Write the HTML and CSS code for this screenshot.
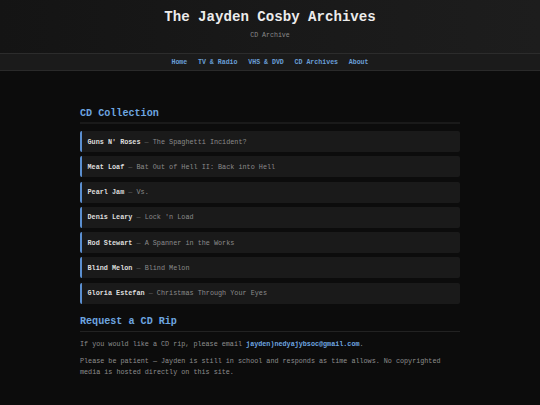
FILE: index.html
```html
<!DOCTYPE html>
<html lang="en">
<head>
<meta charset="utf-8">
<title>The Jayden Cosby Archives</title>
<link rel="stylesheet" href="styles.css">
</head>
<body>
<header class="site-header">
  <h1 class="site-title">The Jayden Cosby Archives</h1>
  <p class="site-subtitle">CD Archive</p>
</header>
<nav class="site-nav">
  <a href="#">Home</a>
  <a href="#">TV &amp; Radio</a>
  <a href="#">VHS &amp; DVD</a>
  <a href="#">CD Archives</a>
  <a href="#">About</a>
</nav>
<main class="content">
  <h2 class="section-title first">CD Collection</h2>
  <ul class="cd-list">
    <li class="cd-item"><span class="artist">Guns N' Roses</span><span class="sep"> — </span><span class="album">The Spaghetti Incident?</span></li>
    <li class="cd-item"><span class="artist">Meat Loaf</span><span class="sep"> — </span><span class="album">Bat Out of Hell II: Back into Hell</span></li>
    <li class="cd-item"><span class="artist">Pearl Jam</span><span class="sep"> — </span><span class="album">Vs.</span></li>
    <li class="cd-item"><span class="artist">Denis Leary</span><span class="sep"> — </span><span class="album">Lock 'n Load</span></li>
    <li class="cd-item"><span class="artist">Rod Stewart</span><span class="sep"> — </span><span class="album">A Spanner in the Works</span></li>
    <li class="cd-item"><span class="artist">Blind Melon</span><span class="sep"> — </span><span class="album">Blind Melon</span></li>
    <li class="cd-item"><span class="artist">Gloria Estefan</span><span class="sep"> — </span><span class="album">Christmas Through Your Eyes</span></li>
  </ul>
  <h2 class="section-title second">Request a CD Rip</h2>
  <p class="text p1">If you would like a CD rip, please email <a class="email" href="#">jayden)nedyajybsoc@gmail.com</a>.</p>
  <p class="text p2">Please be patient — Jayden is still in school and responds as time allows. No copyrighted media is hosted directly on this site.</p>
</main>
</body>
</html>
```
FILE: styles.css
```css
* { box-sizing: border-box; }
html, body {
  margin: 0;
  padding: 0;
  background: #0c0c0c;
  font-family: "Liberation Mono", "DejaVu Sans Mono", monospace;
  color: #8c8c8c;
}
.site-header {
  height: 53px;
  background: linear-gradient(90deg, #141414 0%, #191919 50%, #1d1d1d 100%);
  text-align: center;
  padding-top: 8px;
}
.site-title {
  margin: 0;
  font-size: 14.1px;
  line-height: 18px;
  font-weight: bold;
  color: #ececec;
}
.site-subtitle {
  margin: 6px 0 0;
  font-size: 6.6px;
  line-height: 8px;
  color: #8a8a8a;
}
.site-nav {
  display: flex;
  justify-content: center;
  align-items: center;
  gap: 10.7px;
  height: 18px;
  background: #1b1b1b;
  border-top: 1px solid #2c2c2c;
  border-bottom: 1px solid #2a2a2a;
}
.site-nav a {
  font-size: 6.6px;
  font-weight: bold;
  color: #6a9fd8;
  text-decoration: none;
}
.content {
  width: 380px;
  margin: 0 auto;
  padding-top: 37px;
}
.section-title {
  margin: 0;
  font-size: 10.1px;
  line-height: 12px;
  font-weight: bold;
  color: #6ea6e0;
  padding-bottom: 2px;
  border-bottom: 2px solid #1a1a1a;
}
.section-title.second {
  margin-top: 12px;
  padding-bottom: 3px;
  border-bottom: 1px solid #222;
}
.cd-list {
  list-style: none;
  margin: 7px 0 0;
  padding: 0;
  display: flex;
  flex-direction: column;
  gap: 4.3px;
}
.cd-item {
  height: 21px;
  display: flex;
  align-items: center;
  background: #1a1a1a;
  border-left: 2px solid #5b8fd0;
  border-radius: 2px;
  padding-left: 5.5px;
  font-size: 6.8px;
  white-space: pre;
}
.artist {
  font-weight: bold;
  color: #dedede;
}
.sep { color: #5e5e5e; }
.album { color: #8a8a8a; }
.text {
  margin: 0;
  font-size: 6.75px;
  line-height: 10.5px;
  color: #8e8e8e;
}
.p1 { margin-top: 7.5px; }
.p2 { margin-top: 6px; line-height: 11px; }
.email {
  color: #6ea6e0;
  font-weight: bold;
  text-decoration: none;
}
```
